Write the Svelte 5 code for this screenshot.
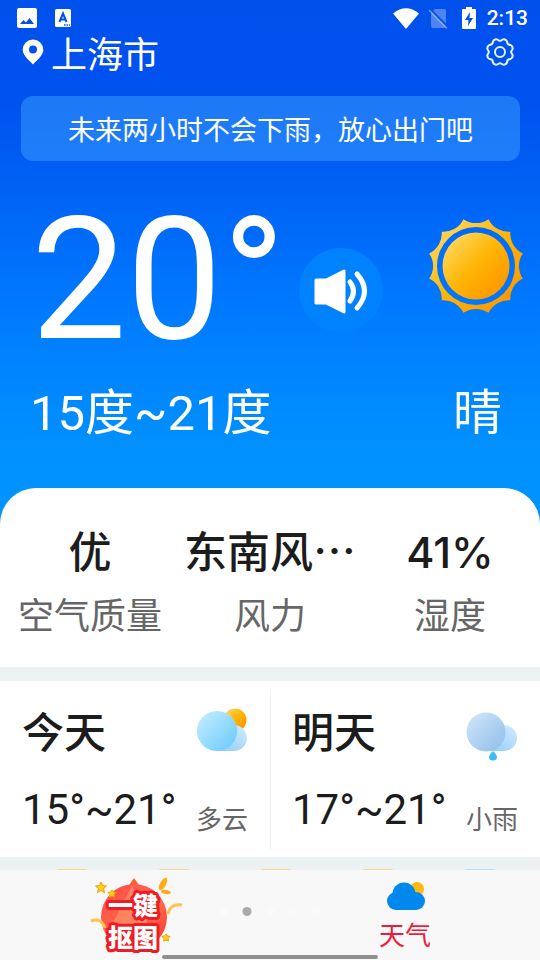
<script lang="ts">
    let city = '上海市';
    let activeTab = $state('weather');
    let speaking = $state(false);

    const stats = [
        { value: '优', label: '空气质量' },
        { value: '东南风⋯', label: '风力' },
        { value: '41%', label: '湿度' }
    ];

    const days = [
        { name: '今天', range: '15°~21°', text: '多云', icon: 'cloudy' },
        { name: '明天', range: '17°~21°', text: '小雨', icon: 'rain' }
    ];

    const hourly = ['sun', 'sun', 'sun', 'sun', 'cloud'];
    const dots = [0, 1, 2, 3, 4];

    function point(r: number, deg: number) {
        const a = (deg * Math.PI) / 180;
        return `${(r * Math.sin(a)).toFixed(2)} ${(-r * Math.cos(a)).toFixed(2)}`;
    }

    // twelve spikes joined by arcs that bend towards the centre
    function sunRays() {
        let d = `M${point(48.5, -15)}`;
        for (let i = 0; i < 12; i++) {
            d += `A22 22 0 0 0 ${point(48.5, 15 + i * 30)}`;
        }
        return d + 'ZM39 0A39 39 0 1 0 -39 0A39 39 0 1 0 39 0Z';
    }

    function gear() {
        let d = '';
        for (let i = 0; i < 8; i++) {
            const a = i * 45;
            d += `${i === 0 ? 'M' : 'L'}${point(12.6, a - 11)}Q${point(10, a)} ${point(12.6, a + 11)}`;
            d += `Q${point(14.6, a + 22.5)} ${point(12.6, a + 34)}`;
        }
        return d + 'Z';
    }
</script>

<div class="screen">
    <main>
        <section class="hero">
            <div class="status">
                <svg width="20" height="20" viewBox="0 0 20 20"><path fill="#fff" fill-rule="evenodd" d="M2 0H18Q20 0 20 2V18Q20 20 18 20H2Q0 20 0 18V2Q0 0 2 0ZM3 16H17L12.500 10L9 14.500L6.500 12Z" /></svg>
                <svg class="lang" width="16" height="18" viewBox="0 0 16 18">
                    <rect width="16" height="18" rx="1.500" fill="#fff" />
                    <path d="M4.500 13L8 4.500L11.500 13M5.500 10.500H10.500" fill="none" stroke="#0050ec" stroke-width="2" />
                    <path d="M9 16H15" stroke="#0050ec" stroke-width="1.500" stroke-dasharray="1.500 1" />
                </svg>
                <span class="space"></span>
                <svg width="26" height="21" viewBox="0 0 26 21"><path fill="#fff" d="M0 5.500Q13 -5 26 5.500L13 21Z" /></svg>
                <svg class="sim" width="20" height="21" viewBox="0 0 20 21">
                    <path fill="#fff" opacity=".3" d="M7 1H16Q18 1 18 3V18Q18 20 16 20H5Q3 20 3 18V5Z" />
                    <path stroke="#0050ec" stroke-width="2" d="M2 1L20 19" />
                    <path stroke="#fff" opacity=".4" stroke-width="1.500" d="M1 2L19 20.500" />
                </svg>
                <svg class="battery" width="14" height="22" viewBox="0 0 14 22">
                    <path fill="#fff" d="M4 0H10V2H13Q14 2 14 3V21Q14 22 13 22H1Q0 22 0 21V3Q0 2 1 2H4Z" />
                    <path fill="#0050ec" d="M8 5L3 13H6.500L6 19L11 11H7.500Z" />
                </svg>
                <time>2:13</time>
            </div>

            <header>
                <svg class="pin" width="22" height="26" viewBox="0 0 22 26"><path fill="#fff" fill-rule="evenodd" d="M11 0.500A10.300 10.300 0 0 1 21.300 10.800C21.300 16 16 20.500 11 25.500C6 20.500 0.700 16 0.700 10.800A10.300 10.300 0 0 1 11 0.500ZM11 6.500A4 4 0 1 0 11 14.500A4 4 0 1 0 11 6.500Z" /></svg>
                <h1>{city}</h1>
                <button class="settings" aria-label="设置">
                    <svg width="30" height="30" viewBox="-15 -15 30 30" fill="none" stroke="#e4f6ff" stroke-width="2" stroke-linejoin="round">
                        <path d={gear()} />
                        <circle r="5" />
                    </svg>
                </button>
            </header>

            <p class="notice">未来两小时不会下雨，放心出门吧</p>

            <div class="now">
                <div class="temp">20°</div>
                <button class="speak" aria-label="语音播报" aria-pressed={speaking} onclick={() => (speaking = !speaking)}>
                    <svg width="84" height="84" viewBox="0 0 84 84">
                        <path fill="#fff" stroke="#fff" stroke-width="3" stroke-linejoin="round" d="M17 32H27L45 23V64L27 55H17Z" />
                        <path fill="none" stroke="#fff" stroke-width="5" stroke-linecap="round" d="M51 34Q58 43 51 53M58 26Q73 43 58 60" />
                    </svg>
                </button>
                <svg class="sun" width="98" height="98" viewBox="-49 -49 98 98">
                    <defs>
                        <linearGradient id="gold" x1="0" y1="0" x2="1" y2="1">
                            <stop offset="0.100" stop-color="#ffd85c" />
                            <stop offset="0.500" stop-color="#ffb404" />
                            <stop offset="0.900" stop-color="#ff9500" />
                        </linearGradient>
                    </defs>
                    <path fill="url(#gold)" fill-rule="evenodd" d={sunRays()} />
                    <circle r="33.500" fill="url(#gold)" />
                </svg>
            </div>

            <div class="range">
                <span>15度~21度</span>
                <span>晴</span>
            </div>
        </section>

        <section class="stats">
            {#each stats as item}
                <div class="stat">
                    <strong>{item.value}</strong>
                    <span>{item.label}</span>
                </div>
            {/each}
        </section>

        <section class="days">
            {#each days as day}
                <article>
                    <div class="line">
                        <h2>{day.name}</h2>
                        <svg width="52" height="52" viewBox="0 0 52 52">
                            <defs>
                                <linearGradient id="cloud" x1="0" y1="0" x2="1" y2="1">
                                    <stop offset="0" stop-color="#c9f0ff" />
                                    <stop offset="1" stop-color="#66c8ff" />
                                </linearGradient>
                                <linearGradient id="grey" x1="0" y1="0" x2="1" y2="1">
                                    <stop offset="0" stop-color="#d3e8fb" />
                                    <stop offset="1" stop-color="#8fbcea" />
                                </linearGradient>
                                <linearGradient id="back" x1="1" y1="0" x2="0" y2="1">
                                    <stop offset="0" stop-color="#d2edff" />
                                    <stop offset="1" stop-color="#8dcaf6" />
                                </linearGradient>
                            </defs>
                            {#if day.icon === 'cloudy'}
                                <circle cx="39" cy="12" r="11.500" fill="url(#gold)" />
                                <path fill="url(#back)" d="M21 43H38A13 13 0 1 0 26 25Z" />
                                <circle cx="21" cy="23" r="20" fill="url(#cloud)" />
                            {:else}
                                <path fill="url(#back)" d="M21 43H38A13 13 0 1 0 26 25Z" />
                                <circle cx="20" cy="24" r="19.500" fill="url(#grey)" />
                                <path fill="#3dbbf5" d="M27 43Q31 47 31 49A4 3.500 0 0 1 23 49Q23 47 27 43Z" />
                            {/if}
                        </svg>
                    </div>
                    <div class="line base">
                        <span class="degrees">{day.range}</span>
                        <span class="cond">{day.text}</span>
                    </div>
                </article>
            {/each}
        </section>

        <section class="hourly">
            {#each hourly as kind}
                <svg width="32" height="32" viewBox="0 0 32 32">
                    {#if kind === 'sun'}
                        <rect width="32" height="32" rx="3" fill="#f8d68a" />
                    {:else}
                        <rect width="32" height="32" rx="3" fill="#b4e0fb" />
                    {/if}
                </svg>
            {/each}
        </section>
    </main>

    <nav>
        <button aria-label="一键抠图" onclick={() => (activeTab = 'cutout')}>
            <svg width="90" height="76" viewBox="0 0 90 76">
                <defs>
                    <linearGradient id="ball" x1="0" y1="0" x2="1" y2="1">
                        <stop offset="0" stop-color="#ff4a4a" />
                        <stop offset="0.600" stop-color="#ff6b4a" />
                        <stop offset="1" stop-color="#f52a2a" />
                    </linearGradient>
                </defs>
                <path fill="#f9602f" d="M37 11L44 1L51 11Z" />
                <circle cx="44" cy="40" r="33" fill="url(#ball)" />
                <path fill="#ff9a70" opacity=".6" d="M42 8L22 48H58Z" />
                <g fill="#ffd21a" stroke="#f0a000" stroke-width="1">
                    <path d="M11 5L12.500 8.500L16.500 9L13.500 11.500L14.500 15.500L11 13.500L7.500 15.500L8.500 11.500L5.500 9L9.500 8.500Z" />
                    <path d="M22 13L23.500 15L26 15.500L24 17.500L24.500 20L22 19L19.500 20L20 17.500L18 15.500L20.500 15Z" />
                    <path d="M76 57L77.500 59L80 59.500L78 61.500L78.500 64L76 63L73.500 64L74 61.500L72 59.500L74.500 59Z" />
                </g>
                <g fill="#ffae17">
                    <ellipse cx="73" cy="7" rx="3" ry="7" transform="rotate(28 73 7)" />
                    <ellipse cx="76" cy="15" rx="2" ry="5" transform="rotate(100 76 15)" />
                </g>
                <path fill="none" stroke="#ffc24a" stroke-width="3" d="M1 44Q11 40 15 51M78 37Q80 26 92 28" />
                <text class="badge" x="18" y="38">一键</text>
                <text class="badge" x="18" y="70">抠图</text>
            </svg>
        </button>
        <button class:active={activeTab === 'weather'} onclick={() => (activeTab = 'weather')}>
            <svg width="40" height="32" viewBox="0 0 40 32">
                <circle cx="32" cy="9" r="7" fill="#ffb80f" />
                <g fill="#0088ee">
                    <circle cx="19" cy="14" r="11.500" />
                    <circle cx="11" cy="21" r="9" />
                    <circle cx="31" cy="21" r="9" />
                    <rect x="11" y="18" width="20" height="12" />
                </g>
            </svg>
            <span>天气</span>
        </button>
        <div class="dots">
            {#each dots as dot}
                <i class:on={dot === 1}></i>
            {/each}
        </div>
        <div class="handle"></div>
    </nav>
</div>

<style>
    :global(body) {
        margin: 0;
    }
    .screen {
        display: flex;
        flex-direction: column;
        height: 100vh;
        background: #ecf1f4;
        color: #1c1c1c;
        font-family: Roboto, "Noto Sans CJK SC", sans-serif;
    }
    main {
        flex: 1;
        min-height: 0;
        overflow-y: auto;
        scrollbar-width: none;
    }
    button {
        padding: 0;
        border: 0;
        background: none;
        font-family: inherit;
        cursor: pointer;
    }
    svg {
        display: block;
        flex-shrink: 0;
        overflow: visible;
    }
    h1, h2, p {
        margin: 0;
        font-weight: 400;
    }

    .hero {
        padding-bottom: 82px;
        background: linear-gradient(#0050ec 0, #0052ee 20%, #0066f7 40%, #007bff 60%, #0090ff 85%, #0095ff 100%);
        color: #fff;
    }
    .status {
        display: flex;
        align-items: center;
        height: 36px;
        padding: 0 12px 0 17px;
    }
    .lang {
        margin-left: 18px;
    }
    .space {
        flex: 1;
    }
    .sim {
        margin-left: 9px;
    }
    .battery {
        margin: 0 11px 0 14px;
    }
    time {
        font-size: 21px;
        font-weight: 500;
    }
    header {
        display: flex;
        align-items: flex-start;
        padding: 0 25px 0 22px;
    }
    .pin {
        margin-top: 3px;
    }
    .settings {
        margin-top: 1px;
    }
    h1 {
        flex: 1;
        margin-left: 7px;
        font-size: 36px;
        line-height: 40px;
    }
    .notice {
        margin: 20px 20px 0 21px;
        padding-top: 5px;
        border-radius: 12px;
        background: rgba(60, 160, 255, .5);
        font-size: 27px;
        line-height: 60px;
        text-align: center;
    }
    .now {
        display: flex;
        align-items: flex-start;
        margin-top: 44px;
        padding: 0 15px 0 31px;
    }
    .temp {
        font-size: 170px;
        line-height: 150px;
    }
    .speak {
        margin-top: 43px;
        margin-left: 13px;
        border-radius: 50%;
        background: #0082ff;
    }
    .sun {
        margin-top: 12px;
        margin-left: auto;
    }
    .range {
        display: flex;
        justify-content: space-between;
        margin-top: 31px;
        padding: 0 38px 0 30px;
        font-size: 49px;
        line-height: 56px;
    }

    .stats {
        display: grid;
        grid-template-columns: repeat(3, 1fr);
        margin-top: -36px;
        padding: 33px 0 28px;
        border-radius: 36px 36px 0 0;
        background: #fff;
        text-align: center;
    }
    .stat {
        display: flex;
        flex-direction: column;
        gap: 12px;
    }
    .stat strong {
        font-family: Inter, "Noto Sans CJK SC", sans-serif;
        font-size: 43px;
        font-weight: 500;
        line-height: 62px;
        white-space: nowrap;
    }
    .stat span {
        color: #666;
        font-size: 36px;
        line-height: 44px;
    }

    .days {
        display: grid;
        grid-template-columns: repeat(2, 1fr);
        margin-top: 14px;
        background: #fff linear-gradient(#ecf1f4, #ecf1f4) no-repeat center / 1px 160px;
    }
    article {
        padding: 25px 22px 19px;
    }
    .line {
        display: flex;
        align-items: center;
        justify-content: space-between;
        line-height: 56px;
    }
    .base {
        align-items: flex-end;
        margin-top: 20px;
        white-space: nowrap;
    }
    h2 {
        font-size: 42px;
        font-weight: 500;
    }
    .degrees {
        font-size: 42px;
    }
    .cond {
        color: #666;
        font-size: 26px;
        line-height: 36px;
    }

    .hourly {
        display: flex;
        justify-content: space-around;
        height: 32px;
        padding: 12px 9px 0 21px;
    }

    nav {
        position: relative;
        display: grid;
        grid-template-columns: repeat(2, 1fr);
        height: 90px;
        background: #f8f8f8;
    }
    nav button {
        display: flex;
        flex-direction: column;
        align-items: center;
        justify-content: center;
        color: #666;
        font-size: 26px;
        line-height: 36px;
    }
    nav .active {
        padding-top: 4px;
        color: #ee1c3a;
    }
    nav span {
        margin-top: 6px;
    }
    .badge {
        fill: #fff;
        stroke: #ee1c24;
        stroke-width: 6px;
        stroke-linejoin: round;
        paint-order: stroke;
        font-family: Roboto, "Noto Sans CJK SC", sans-serif;
        font-size: 25px;
        font-weight: 900;
    }
    .dots {
        position: absolute;
        top: 37px;
        left: 50%;
        display: flex;
        gap: 14px;
        transform: translateX(-50%);
    }
    .dots i {
        width: 9px;
        height: 9px;
        border-radius: 50%;
        background: #fafafa;
    }
    .dots .on {
        background: #aaa;
    }
    .handle {
        position: absolute;
        right: 30%;
        bottom: 1px;
        left: 30%;
        height: 4px;
        border-radius: 2px;
        background: #8f8f8f;
    }
</style>
